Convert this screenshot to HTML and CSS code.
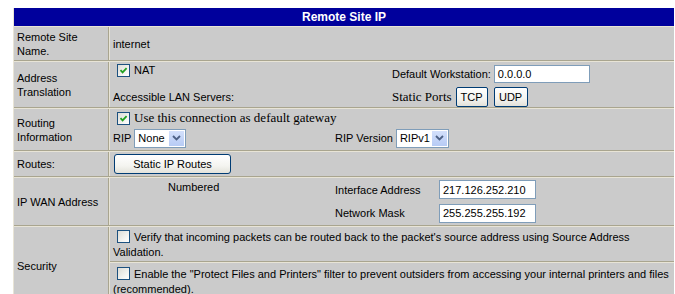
FILE: index.html
```html
<!DOCTYPE html>
<html>
<head>
<meta charset="utf-8">
<link rel="stylesheet" href="styles.css">
</head>
<body>
<div class="panel">
  <div class="hdr">Remote Site IP</div>

  <div class="row r1">
    <div class="lbl">Remote Site<br>Name.</div>
    <div class="val center">internet</div>
  </div>

  <div class="row r2">
    <div class="lbl">Address<br>Translation</div>
    <div class="val split2">
      <div class="col-a">
        <div class="line nat"><span class="cb"><svg width="11" height="11" viewBox="0 0 11 11"><path d="M2.5 5.2 L4.6 7.4 L8.6 3.2" fill="none" stroke="#21a121" stroke-width="1.8"/></svg></span>NAT</div>
        <div class="line als">Accessible LAN Servers:</div>
      </div>
      <div class="col-b">
        <div class="line dw">Default Workstation: <span class="inp w96">0.0.0.0</span></div>
        <div class="line sp"><span class="serif">Static Ports</span> <span class="btn tcp">TCP</span><span class="btn udp">UDP</span></div>
      </div>
    </div>
  </div>

  <div class="row r3">
    <div class="lbl">Routing<br>Information</div>
    <div class="val">
      <div class="line gw"><span class="cb"><svg width="11" height="11" viewBox="0 0 11 11"><path d="M2.5 5.2 L4.6 7.4 L8.6 3.2" fill="none" stroke="#21a121" stroke-width="1.8"/></svg></span><span class="serif">Use this connection as default gateway</span></div>
      <div class="line rip">
        <div class="rip-a">RIP <span class="sel s52"><span class="sel-t">None</span><span class="sel-b"><svg width="9" height="6" viewBox="0 0 9 6"><path d="M1 1 L4.5 4.5 L8 1" fill="none" stroke="#4d6185" stroke-width="1.8"/></svg></span></span></div>
        <div class="rip-b">RIP Version <span class="sel s53"><span class="sel-t">RIPv1</span><span class="sel-b"><svg width="9" height="6" viewBox="0 0 9 6"><path d="M1 1 L4.5 4.5 L8 1" fill="none" stroke="#4d6185" stroke-width="1.8"/></svg></span></span></div>
      </div>
    </div>
  </div>

  <div class="row r4">
    <div class="lbl">Routes:</div>
    <div class="val"><span class="btn routes">Static IP Routes</span></div>
  </div>

  <div class="row r5">
    <div class="lbl">IP WAN Address</div>
    <div class="val wan">
      <div class="numbered">Numbered</div>
      <div class="wan-l">Interface Address</div>
      <div><span class="inp w97">217.126.252.210</span></div>
      <div></div>
      <div class="wan-l">Network Mask</div>
      <div><span class="inp w97">255.255.255.192</span></div>
    </div>
  </div>

  <div class="row r6">
    <div class="lbl">Security</div>
    <div class="val nopad">
      <div class="sub s1"><span class="cb"></span>Verify that incoming packets can be routed back to the packet's source address using Source Address<br>Validation.</div>
      <div class="sub s2"><span class="cb"></span>Enable the "Protect Files and Printers" filter to prevent outsiders from accessing your internal printers and files<br>(recommended).</div>
    </div>
  </div>
</div>
</body>
</html>
```

FILE: styles.css
```css
html, body { background: #fff; }
body {
  margin: 8px 0 0 13px;
  font: 11px "Liberation Sans", Arial, sans-serif;
  color: #000;
  overflow: hidden;
}
.panel {
  width: 661px;
  background: #cbcbcb;
  border-left: 1px solid #e8e4d6;
  box-sizing: border-box;
}
.hdr {
  height: 18px;
  line-height: 18px;
  background: #00009c;
  color: #fff;
  font-weight: bold;
  font-size: 12px;
  text-align: center;
}
.row {
  display: grid;
  grid-template-columns: 95px 1fr;
  border-top: 1px solid #e8e4d6;
  border-bottom: 1px solid #a9a58f;
  box-sizing: border-box;
}
.r1 { height: 35px; }
.r2 { height: 47px; }
.r3 { height: 43px; }
.r4 { height: 26px; }
.r5 { height: 49px; }
.r6 { height: 80px; }
.lbl {
  border-right: 1px solid #a9a58f;
  padding-left: 3px;
  display: flex;
  align-items: center;
  line-height: 14px;
}
.val {
  border-left: 1px solid #e8e4d6;
  padding-left: 3px;
}
.val.center { display: flex; align-items: center; }
.val.nopad { padding-left: 0; }
.serif { font-family: "Liberation Serif", "Times New Roman", serif; font-size: 13px; }
.line { display: flex; align-items: center; white-space: nowrap; }

.cb {
  display: inline-block;
  width: 11px;
  height: 11px;
  border: 1px solid #1c5180;
  background: linear-gradient(135deg, #dcdcd6, #f6f6f4 70%, #fff);
  margin: 0 4px 0 4px;
  vertical-align: middle;
  flex: none;
}
.cb svg { display: block; }

.split2 { display: grid; grid-template-columns: 279px 1fr; }
.col-a { padding-top: 1px; }
.nat { height: 14px; }
.als { height: 14px; margin-top: 13px; }
.col-b { padding-top: 3px; }
.dw { height: 18px; }
.sp { height: 20px; margin-top: 4px; }
.sp .serif { margin-right: 4px; }

.inp {
  display: inline-flex;
  align-items: center;
  box-sizing: border-box;
  height: 18px;
  background: #fff;
  border: 1px solid #7f9db9;
  padding-left: 3px;
  font-size: 11px;
}
.w96 { width: 96px; margin-left: 3px; }
.w97 { width: 97px; height: 19px; }

.btn {
  display: inline-flex;
  align-items: center;
  justify-content: center;
  box-sizing: border-box;
  height: 20px;
  border: 1px solid #003c74;
  border-radius: 2px;
  background: linear-gradient(#ffffff, #f4f4f0 60%, #e3e2da);
  font-size: 11px;
}
.tcp { width: 32px; }
.udp { width: 34px; margin-left: 6px; }
.routes { width: 117px; margin: 2px 0 0 1px; border-radius: 3px; }

.gw { height: 14px; margin-top: 2px; }
.rip { height: 20px; margin-top: 3px; display: grid; grid-template-columns: 222px 1fr; }
.rip-a, .rip-b { display: flex; align-items: center; }
.sel {
  display: inline-flex;
  box-sizing: border-box;
  height: 19px;
  background: #fff;
  border: 1px solid #7f9db9;
  margin-left: 3px;
}
.s52 { width: 52px; }
.s53 { width: 53px; }
.sel-t { flex: 1; display: flex; align-items: center; padding-left: 3px; font-size: 11px; }
.sel-b {
  width: 15px;
  margin: 1px;
  background: linear-gradient(#d3e0fb, #b7cbf5);
  display: flex;
  align-items: center;
  justify-content: center;
}
.sel-b svg { display: block; }

.wan {
  display: grid;
  grid-template-columns: 222px 104px 1fr;
  grid-template-rows: 19px 18px;
  row-gap: 5px;
  padding-top: 2px;
  align-items: center;
}
.numbered { padding-left: 55px; align-self: start; margin-top: 1px; }

.sub { padding-left: 3px; line-height: 15px; white-space: nowrap; }
.s1 { height: 35px; box-sizing: border-box; padding-top: 3px; border-bottom: 1px solid #a9a58f; }
.s2 { border-top: 1px solid #e8e4d6; padding-top: 4px; }
.sub .cb { vertical-align: -2px; }
```
